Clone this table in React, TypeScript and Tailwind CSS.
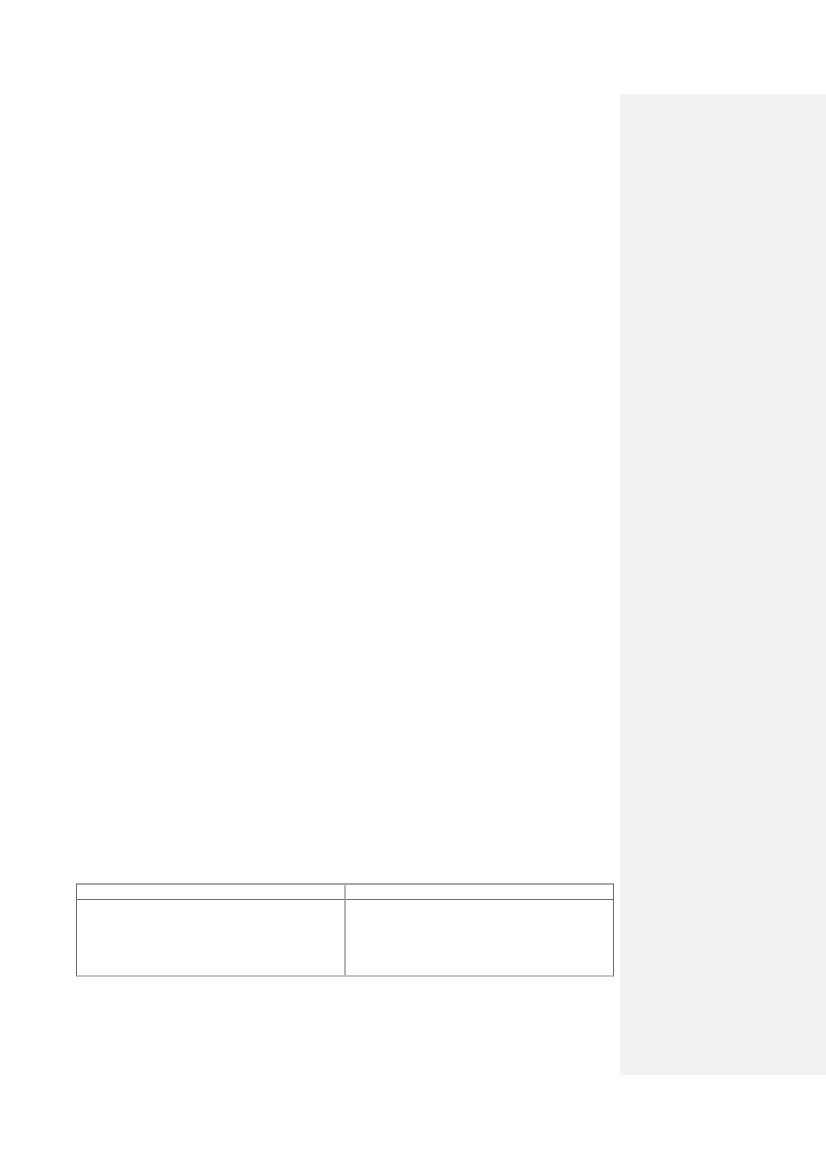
import React from 'react';

const App: React.FC = () => {
  return (
    <div className="w-[826px] h-[1169px] bg-white flex overflow-hidden" style={{ fontFamily: '"Liberation Sans", Arial, sans-serif' }}>
      {/* Document page */}
      <main className="w-[620px] shrink-0 pt-[883px] pl-[76px]">
        <div className="w-[538px] border-t-2 border-t-[#a8a8a8] border-l border-l-[#6b6b6b] border-r border-r-[#6b6b6b] border-b-2 border-b-[#c4c4c4] grid grid-cols-[269px_1fr]">
          <div className="h-[15px] border-b border-b-[#6b6b6b] border-r-2 border-r-[#b4b4b4]"></div>
          <div className="h-[15px] border-b border-b-[#6b6b6b]"></div>
          <div className="h-[75px] border-r-2 border-r-[#b4b4b4]"></div>
          <div className="h-[75px]"></div>
        </div>
      </main>

      {/* Comment margin */}
      <aside className="flex-1 pt-[94px]">
        <div className="h-[981px] bg-[#f2f2f2]"></div>
      </aside>
    </div>
  );
};

export default App;
